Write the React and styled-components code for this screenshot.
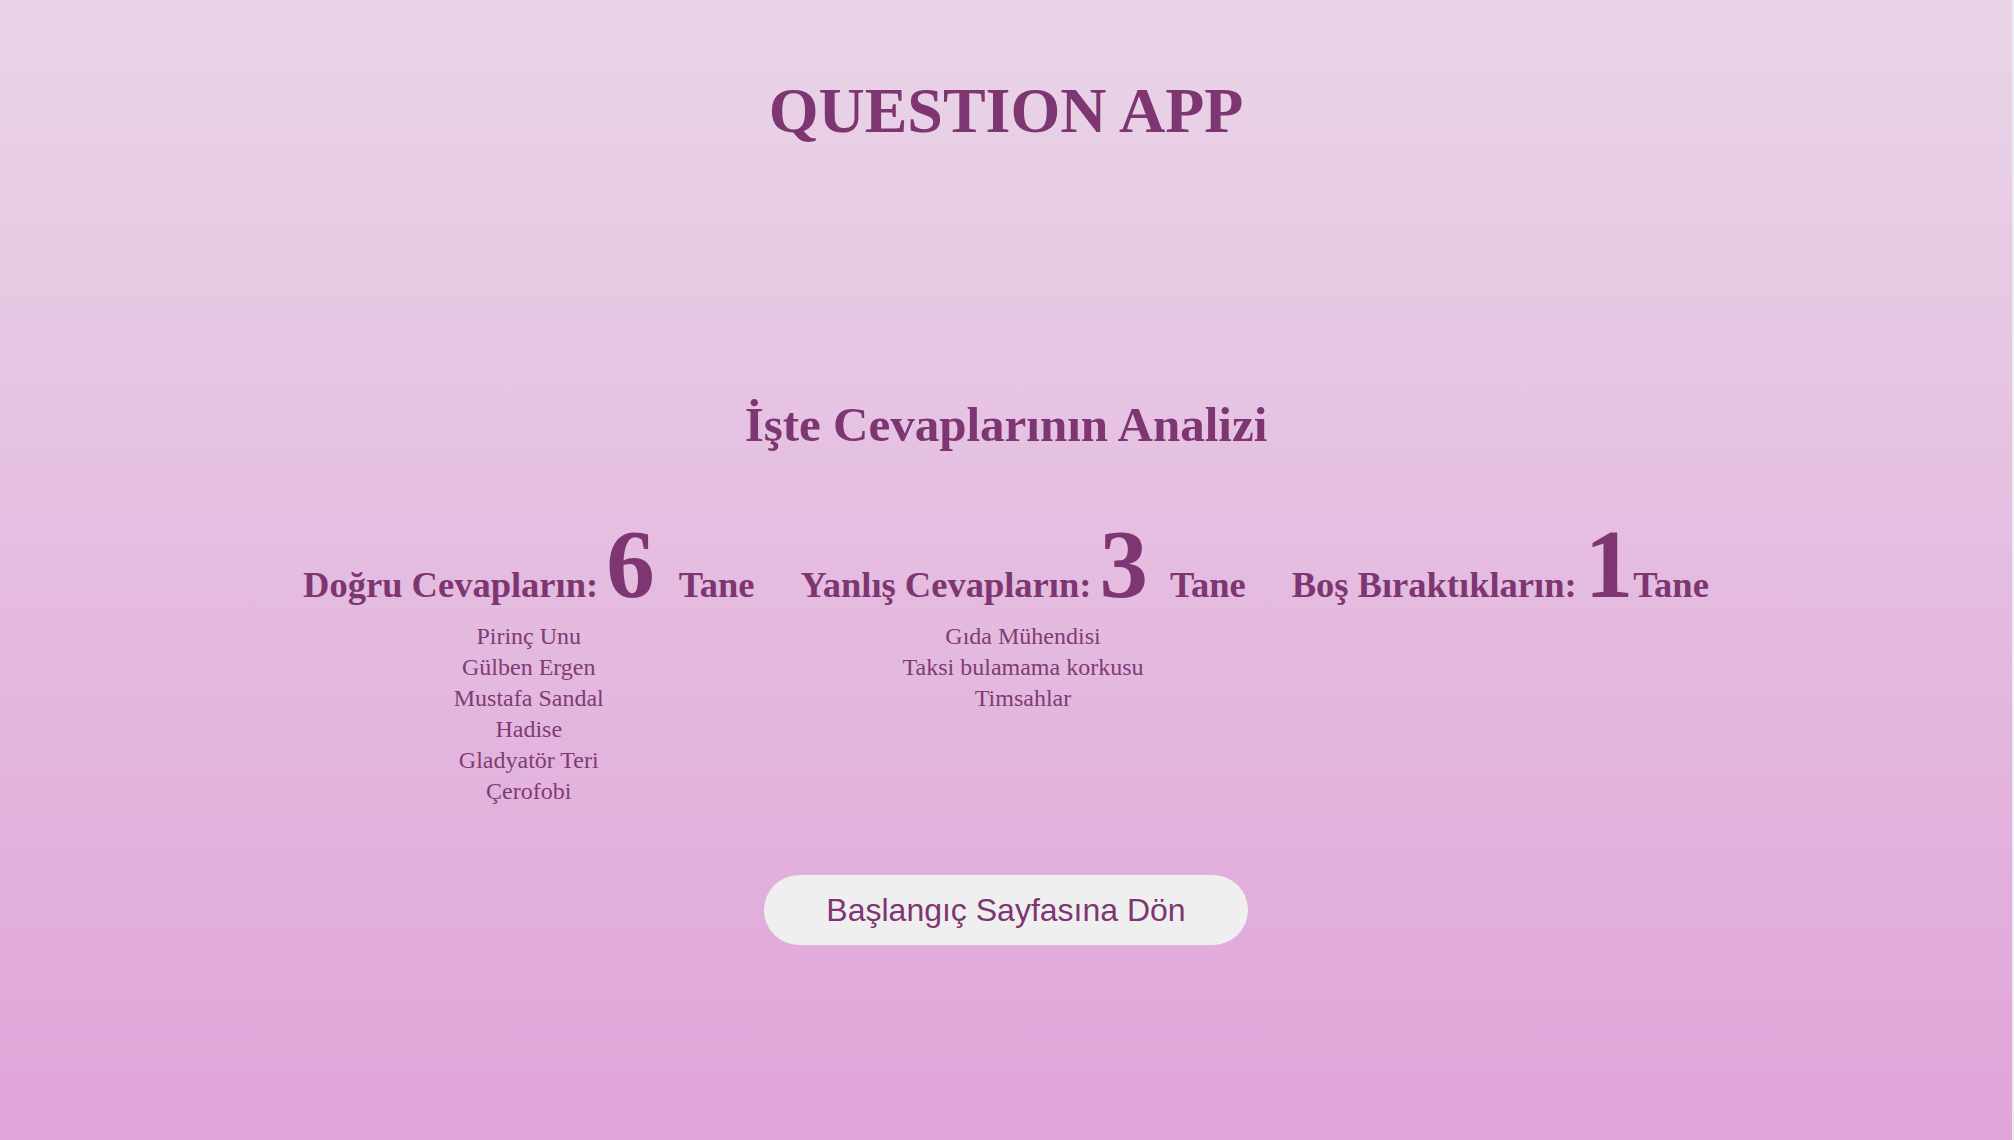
import styled, { createGlobalStyle } from 'styled-components';

const GlobalStyle = createGlobalStyle`
  html, body {
    margin: 0;
    padding: 0;
    background: #eeecf3;
  }
  * {
    box-sizing: border-box;
  }
`;

const correct = ['Pirinç Unu', 'Gülben Ergen', 'Mustafa Sandal', 'Hadise', 'Gladyatör Teri', 'Çerofobi'];
const wrong = ['Gıda Mühendisi', 'Taksi bulamama korkusu', 'Timsahlar'];

const stats = [
  { label: 'Doğru Cevapların:', count: 6, items: correct, after: 24 },
  { label: 'Yanlış Cevapların:', count: 3, items: wrong, after: 22 },
  { label: 'Boş Bıraktıkların:', count: 1, items: [], after: 0 },
];

const App = () => {
  return (
    <Page>
      <GlobalStyle />
      <Title>QUESTION APP</Title>
      <Heading>İşte Cevaplarının Analizi</Heading>
      <StatsRow>
        {stats.map((s) => (
          <StatColumn key={s.label}>
            <StatLine>
              <Label>{s.label}</Label>
              <Count $after={s.after}>{s.count}</Count>
              <Label>Tane</Label>
            </StatLine>
            <AnswerList>
              {s.items.map((item) => (
                <Answer key={item}>{item}</Answer>
              ))}
            </AnswerList>
          </StatColumn>
        ))}
      </StatsRow>
      <HomeButton>Başlangıç Sayfasına Dön</HomeButton>
    </Page>
  );
};

const Page = styled.div`
  width: calc(100% - 2px);
  min-height: 1140px;
  background: linear-gradient(180deg, #e9d5e7 0%, #e0a4d9 100%);
  display: flex;
  flex-direction: column;
  align-items: center;
  padding-top: 79px;
  font-family: 'Liberation Serif', 'Times New Roman', serif;
  color: #7e3672;
`;

const Title = styled.h1`
  margin: 0;
  font-size: 64px;
  line-height: 1;
  font-weight: 700;
`;

const Heading = styled.h2`
  margin: 257px 0 0;
  font-size: 49px;
  line-height: 1;
  font-weight: 700;
`;

const StatsRow = styled.div`
  display: flex;
  justify-content: center;
  align-items: flex-start;
  gap: 46px;
  margin-top: 67px;
`;

const StatColumn = styled.div`
  display: flex;
  flex-direction: column;
  align-items: center;
`;

const StatLine = styled.div`
  display: flex;
  align-items: baseline;
`;

const Label = styled.span`
  font-size: 36.5px;
  line-height: 1;
  font-weight: 700;
`;

const Count = styled.span`
  font-size: 97px;
  line-height: 1;
  font-weight: 700;
  margin: 0 ${(p) => p.$after}px 0 8px;
`;

const AnswerList = styled.div`
  display: flex;
  flex-direction: column;
  align-items: center;
  margin-top: 8px;
`;

const Answer = styled.div`
  font-size: 24px;
  line-height: 31px;
  color: #7f3b75;
`;

const HomeButton = styled.button`
  margin-top: 68px;
  width: 484px;
  height: 70px;
  border: none;
  border-radius: 35px;
  background: #efefef;
  color: #7e3672;
  font-family: 'Liberation Sans', Arial, sans-serif;
  font-size: 32px;
  cursor: pointer;
`;

export default App;
